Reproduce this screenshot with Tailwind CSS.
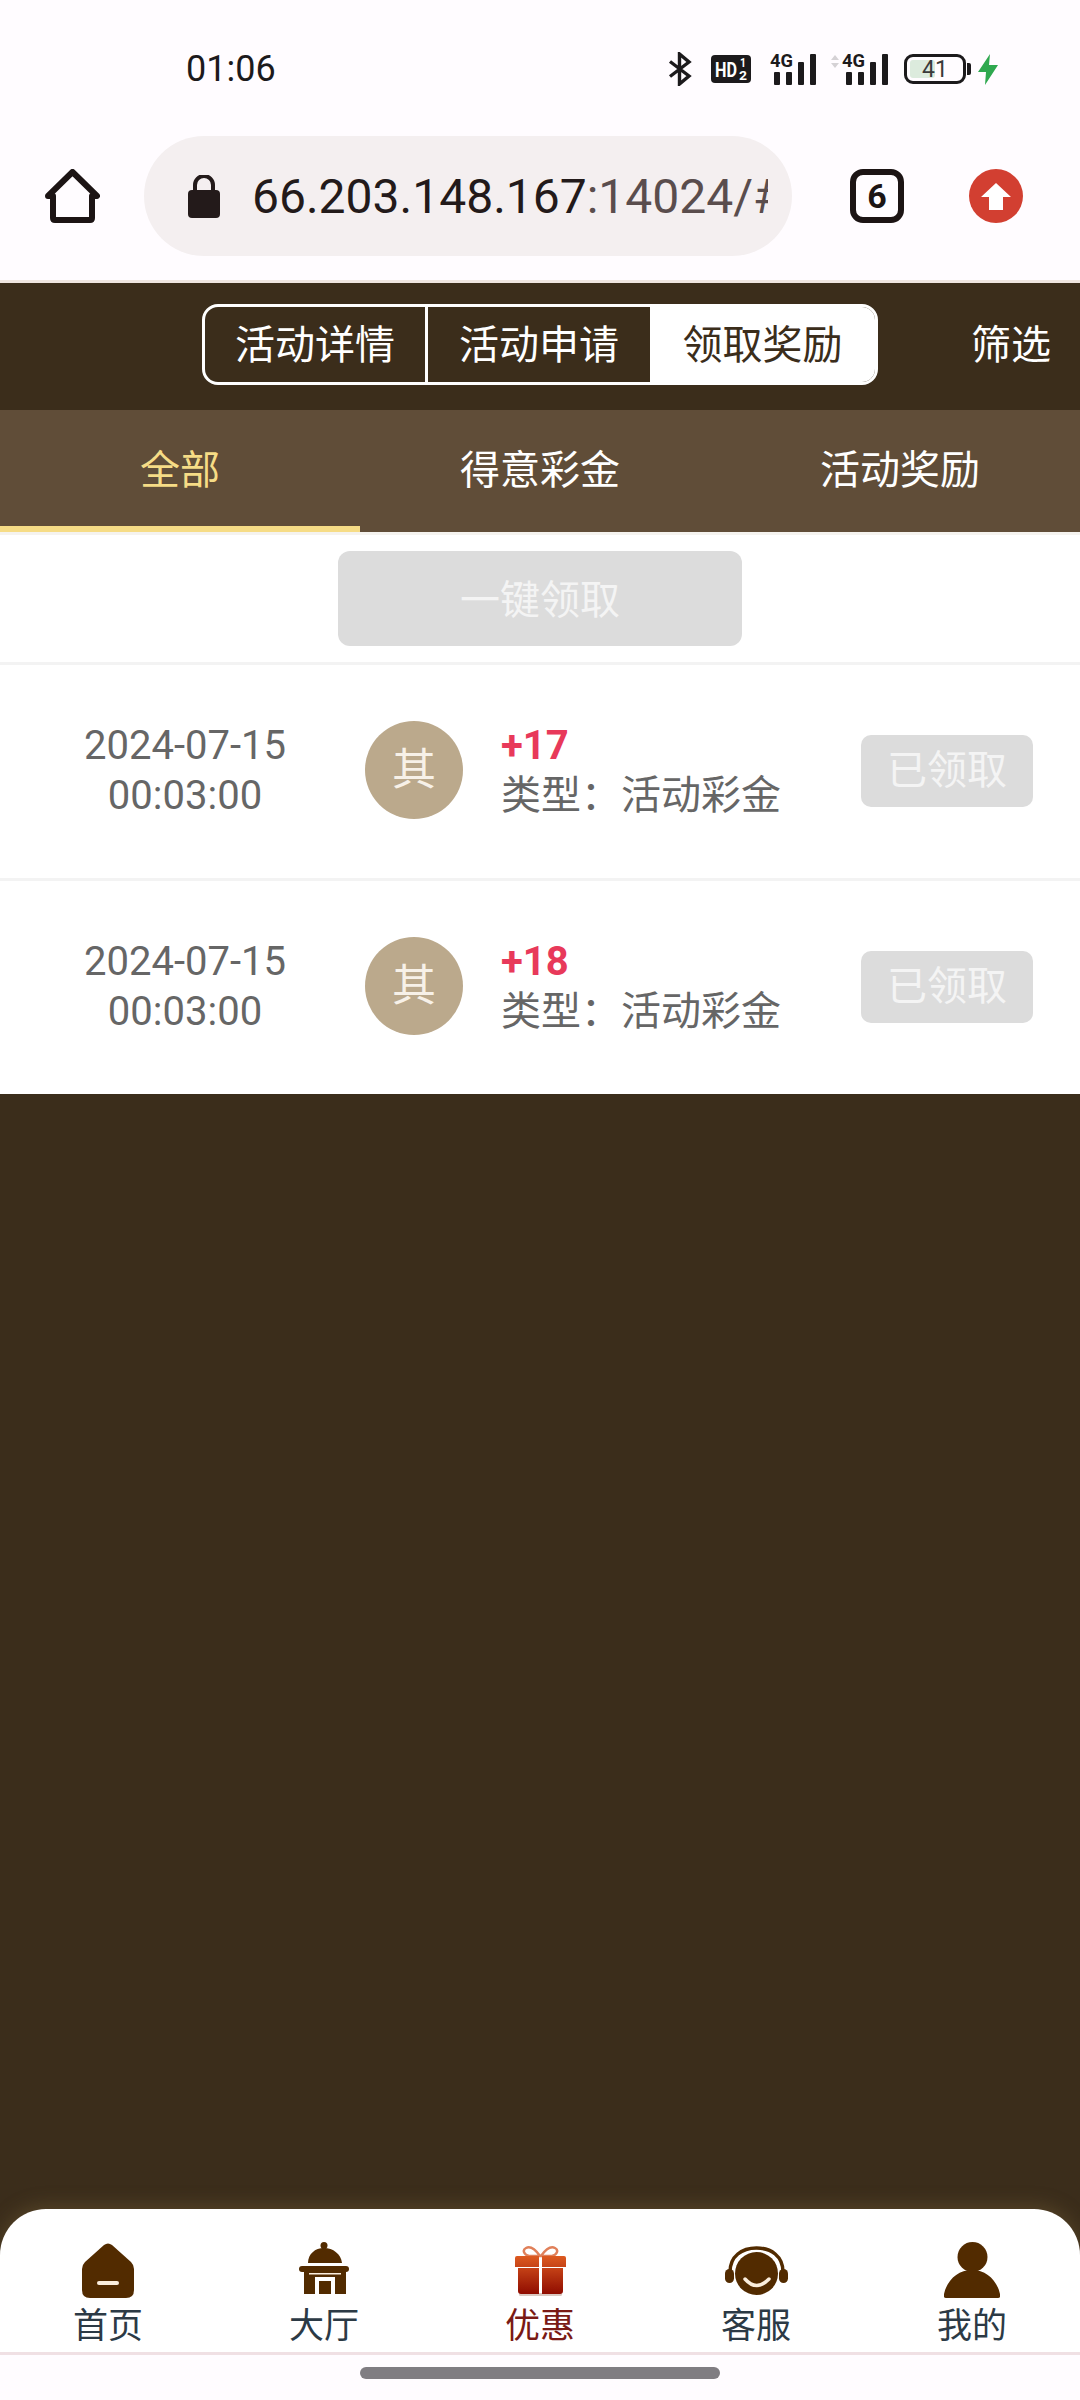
<!DOCTYPE html>
<html lang="zh-CN">
<head>
    <meta charset="UTF-8">
    <meta name="viewport" content="width=device-width, initial-scale=1.0">
    <title>领取奖励</title>
    <script src="https://cdn.jsdelivr.net/npm/@tailwindcss/browser@4"></script>
</head>
<body class="bg-[#3b2d1b]">
    <div class="w-[1080px] h-[2400px] flex flex-col overflow-hidden font-['Roboto','Noto_Sans_CJK_SC',sans-serif]">

        <!-- Browser chrome -->
        <div class="bg-[#fffcff] border-b-[3px] border-[#efe5e0]">
            <div class="h-[136px] pt-[47px] pl-[186px] pr-[82px] flex items-start justify-between">
                <span class="text-[36px] leading-[44px] text-[#1c1a1c]">01:06</span>
                <div class="flex items-center h-[44px]">
                    <svg width="24" height="34" viewBox="0 0 24 34" fill="none" stroke="#1c1a1c" stroke-width="3.4"><path d="M2 9.5 21 24 11.5 32V2L21 10 2 24.500"/></svg>
                    <svg class="ml-[19px]" width="40" height="28" viewBox="0 0 40 28">
                        <rect width="40" height="28" rx="4" fill="#1c1a1c"/>
                        <text x="4" y="22" font-size="21" font-weight="700" fill="#fff" font-family="Roboto" textLength="22" lengthAdjust="spacingAndGlyphs">HD</text>
                        <text x="29" y="12" font-size="12" font-weight="700" fill="#fff" font-family="Roboto" textLength="6" lengthAdjust="spacingAndGlyphs">1</text>
                        <text x="28" y="25" font-size="12" font-weight="700" fill="#fff" font-family="Roboto" textLength="8" lengthAdjust="spacingAndGlyphs">2</text>
                    </svg>
                    <svg class="ml-[19px]" width="46" height="32" viewBox="0 0 46 32" fill="#1c1a1c">
                        <text x="0" y="14" font-size="19" font-weight="700" font-family="Roboto" textLength="23" lengthAdjust="spacingAndGlyphs">4G</text>
                        <rect x="4" y="19" width="6" height="13" rx="1"/><rect x="16" y="19" width="6" height="13" rx="1"/><rect x="28" y="9" width="6" height="23" rx="1"/><rect x="40" y="1" width="6" height="31" rx="1"/>
                    </svg>
                    <svg class="ml-[12px]" width="60" height="32" viewBox="0 0 60 32" fill="#1c1a1c">
                        <path d="M3 7 7 2 11 7ZM3 10 7 15 11 10Z" fill="#d5d2d5"/>
                        <text x="14" y="14" font-size="19" font-weight="700" font-family="Roboto" textLength="23" lengthAdjust="spacingAndGlyphs">4G</text>
                        <rect x="18" y="19" width="6" height="13" rx="1"/><rect x="30" y="19" width="6" height="13" rx="1"/><rect x="42" y="9" width="6" height="23" rx="1"/><rect x="54" y="1" width="6" height="31" rx="1"/>
                    </svg>
                    <div class="ml-[16px] relative w-[62px] h-[30px] border-[3px] border-[#1c1a1c] rounded-[9px] p-[3px]">
                        <div class="w-[25px] h-full bg-[#dcebdd] rounded-[3px]"></div>
                        <span class="absolute inset-0 flex items-center justify-center text-[23px] leading-none text-[#3a3a3a]">41</span>
                    </div>
                    <div class="w-[4px] h-[12px] bg-[#1c1a1c] ml-[1px] rounded-r-[2px]"></div>
                    <svg class="ml-[7px]" width="20" height="31" viewBox="0 0 20 31" fill="#2fa84f"><path d="M12 0 0 18H8L7 31 20 11H11Z"/></svg>
                </div>
            </div>
            <div class="h-[144px] pb-[24px] pl-[45px] flex items-center">
                <svg width="55" height="54" viewBox="0 0 55 54" fill="none" stroke="#1c1414" stroke-width="6" stroke-linejoin="round"><path d="M3 27 27.500 3 52 27H47V49Q47 51 45 51H10Q8 51 8 49V27Z"/></svg>
                <div class="ml-[44px] w-[648px] h-[120px] rounded-full bg-[#f4eff0] flex items-center pl-[44px] pr-[24px]">
                    <svg class="shrink-0" width="32" height="43" viewBox="0 0 32 43"><path d="M7 16V10a9 9 0 0 1 18 0V16" fill="none" stroke="#231a1a" stroke-width="4"/><rect y="15" width="32" height="28" rx="4" fill="#231a1a"/></svg>
                    <div class="ml-[32px] mt-[2px] overflow-hidden whitespace-nowrap text-[48px] leading-[60px] text-[#231a1a]">66.203.148.167<span class="text-[#5a4d4d]">:14024/#/activity</span></div>
                </div>
                <div class="ml-[58px] w-[54px] h-[54px] border-[6px] border-[#1c1414] rounded-[13px] flex items-center justify-center text-[34px] font-bold leading-none text-[#1c1414]">6</div>
                <div class="ml-[65px] w-[54px] h-[54px] rounded-full bg-[#d23f31] flex items-center justify-center">
                    <svg width="30" height="27" viewBox="0 0 30 27" fill="#fff"><path d="M15 0 30 14H22V27H8V14H0Z"/></svg>
                </div>
            </div>
        </div>

        <!-- Page header -->
        <div class="h-[127px] bg-[#3b2d1b] relative flex items-start pt-[21px] pl-[202px]">
            <div class="w-[676px] h-[81px] border-[3px] border-white rounded-[16px] overflow-hidden flex text-[40px] leading-[77px] text-center text-white">
                <div class="w-[223px] border-r-[3px] border-white">活动详情</div>
                <div class="w-[222px]">活动申请</div>
                <div class="flex-1 bg-white text-[#3b2d1b]">领取奖励</div>
            </div>
            <span class="absolute left-[971px] top-[25px] text-[40px] leading-[75px] text-white">筛选</span>
        </div>

        <!-- Tabs -->
        <div class="h-[125px] bg-[#604d38] border-b-[3px] border-[#f5f3ef] grid grid-cols-3 text-[40px] text-center leading-[122px]">
            <div class="text-[#f6dc86] h-[122px] border-b-[6px] border-[#f6dc86]">全部</div>
            <div class="text-white">得意彩金</div>
            <div class="text-white">活动奖励</div>
        </div>

        <!-- List -->
        <div class="bg-white">
            <div class="h-[130px] border-b-[3px] border-[#f3f3f3] pt-[16px] flex justify-center">
                <button class="w-[404px] h-[95px] pt-[4px] rounded-[12px] bg-[#dcdcdc] text-[40px] text-[#f4f4f4]">一键领取</button>
            </div>
            <div class="h-[216px] pb-[3px] border-b-[3px] border-[#f3f3f3] flex items-center">
                <div class="w-[370px] mt-[2px] text-center text-[40px] leading-[50px] text-[#666]">2024-07-15<br>00:03:00</div>
                <div class="-ml-[5px] w-[98px] h-[98px] rounded-full bg-[#bba98c] flex items-center justify-center text-[44px] text-[#f7f1e8]">其</div>
                <div class="ml-[38px] mt-[2px] text-[40px] leading-[50px] text-[#666]">
                    <div class="font-bold text-[#e8395a]">+17</div>
                    <div>类型：活动彩金</div>
                </div>
                <button class="ml-auto mr-[47px] mt-[2px] w-[172px] h-[72px] rounded-[10px] bg-[#dcdcdc] text-[40px] text-[#f4f4f4]">已领取</button>
            </div>
            <div class="h-[213px] pb-[3px] flex items-center">
                <div class="w-[370px] mt-[2px] text-center text-[40px] leading-[50px] text-[#666]">2024-07-15<br>00:03:00</div>
                <div class="-ml-[5px] w-[98px] h-[98px] rounded-full bg-[#bba98c] flex items-center justify-center text-[44px] text-[#f7f1e8]">其</div>
                <div class="ml-[38px] mt-[2px] text-[40px] leading-[50px] text-[#666]">
                    <div class="font-bold text-[#e8395a]">+18</div>
                    <div>类型：活动彩金</div>
                </div>
                <button class="ml-auto mr-[47px] mt-[2px] w-[172px] h-[72px] rounded-[10px] bg-[#dcdcdc] text-[40px] text-[#f4f4f4]">已领取</button>
            </div>
        </div>

        <div class="flex-1"></div>

        <!-- Bottom nav -->
        <div class="h-[146px] bg-white rounded-t-[46px] border-b-[3px] border-[#f0e0e4] shadow-[0_-4px_18px_rgba(130,105,60,0.35)] grid grid-cols-5 pt-[33px] text-[35px] leading-[44px] text-center text-[#2c3a45]">
            <div class="flex flex-col items-center">
                <div class="h-[56px] pt-[1px]">
                    <svg width="52" height="55" viewBox="0 0 52 55"><path d="M22 2Q26-1 30 2L49 19Q52 22 52 26V47Q52 55 44 55H8Q0 55 0 47V26Q0 22 3 19Z" fill="#522b00"/><rect x="15" y="38" width="22" height="4" rx="2" fill="#fbeedd"/></svg>
                </div>
                <span class="mt-[7px]">首页</span>
            </div>
            <div class="flex flex-col items-center">
                <div class="h-[56px]">
                    <svg width="50" height="52" viewBox="0 0 50 52" fill="#522b00">
                        <circle cx="25" cy="3.500" r="3.500"/><rect x="23" y="3" width="4" height="5"/>
                        <path d="M9 21C9 12 16 6 25 6S42 12 43 21Z"/>
                        <rect y="24" width="50" height="6" rx="3"/>
                        <rect x="5" y="28" width="42" height="24"/>
                        <rect x="10" y="31" width="32" height="1.500" fill="#fbeedd"/>
                        <path d="M18 52V37H34V52" fill="none" stroke="#fff" stroke-width="4"/>
                    </svg>
                </div>
                <span class="mt-[7px]">大厅</span>
            </div>
            <div class="flex flex-col items-center text-[#7a1a14]">
                <div class="h-[56px] pt-[4px]">
                    <svg width="51" height="50" viewBox="0 0 51 50">
                        <defs><linearGradient id="giftFill" x1="0" y1="0" x2="0" y2="1"><stop offset="0" stop-color="#dd5a20"/><stop offset="1" stop-color="#8f0c00"/></linearGradient></defs>
                        <rect x="4" y="47" width="43" height="3" rx="1.500" fill="#d9c8c0"/>
                        <path d="M25 10C20 3 15 0 11 2 7 4 9 9 14 10ZM26 10C31 3 36 0 40 2 44 4 42 9 37 10Z" fill="none" stroke="#e0805a" stroke-width="2.500"/>
                        <path d="M2 10H24V21H0V12Q0 10 2 10ZM27 10H49Q51 10 51 12V21H27ZM3 22H24V48H6Q3 48 3 45ZM27 22H48V45Q48 48 45 48H27Z" fill="url(#giftFill)"/>
                    </svg>
                </div>
                <span class="mt-[7px]">优惠</span>
            </div>
            <div class="flex flex-col items-center">
                <div class="h-[56px] pt-[4px]">
                    <svg width="63" height="50" viewBox="0 0 63 50">
                        <circle cx="31.500" cy="27.500" r="21.500" fill="#522b00"/>
                        <path d="M5 26C5 10 17 2 31.500 2S58 10 58 26" fill="none" stroke="#522b00" stroke-width="3.500"/>
                        <rect y="23" width="9" height="14" rx="4.500" fill="#522b00"/><rect x="54" y="23" width="9" height="14" rx="4.500" fill="#522b00"/>
                        <path d="M20 33Q31.500 46 44 33" fill="none" stroke="#fbeedd" stroke-width="3.500" stroke-linecap="round"/>
                    </svg>
                </div>
                <span class="mt-[7px]">客服</span>
            </div>
            <div class="flex flex-col items-center">
                <div class="h-[56px]">
                    <svg width="56" height="56" viewBox="0 0 56 56" fill="#522b00"><ellipse cx="28.500" cy="15" rx="15" ry="15"/><path d="M2 56Q-1 56 0 52C3 38 14 28 28 28S53 38 56 52Q57 56 54 56Z"/></svg>
                </div>
                <span class="mt-[7px]">我的</span>
            </div>
        </div>

        <!-- Gesture bar -->
        <div class="h-[45px] bg-[#fffcff] pt-[12px] flex justify-center">
            <div class="w-[360px] h-[12px] rounded-full bg-[#807d82]"></div>
        </div>
    </div>
</body>
</html>
